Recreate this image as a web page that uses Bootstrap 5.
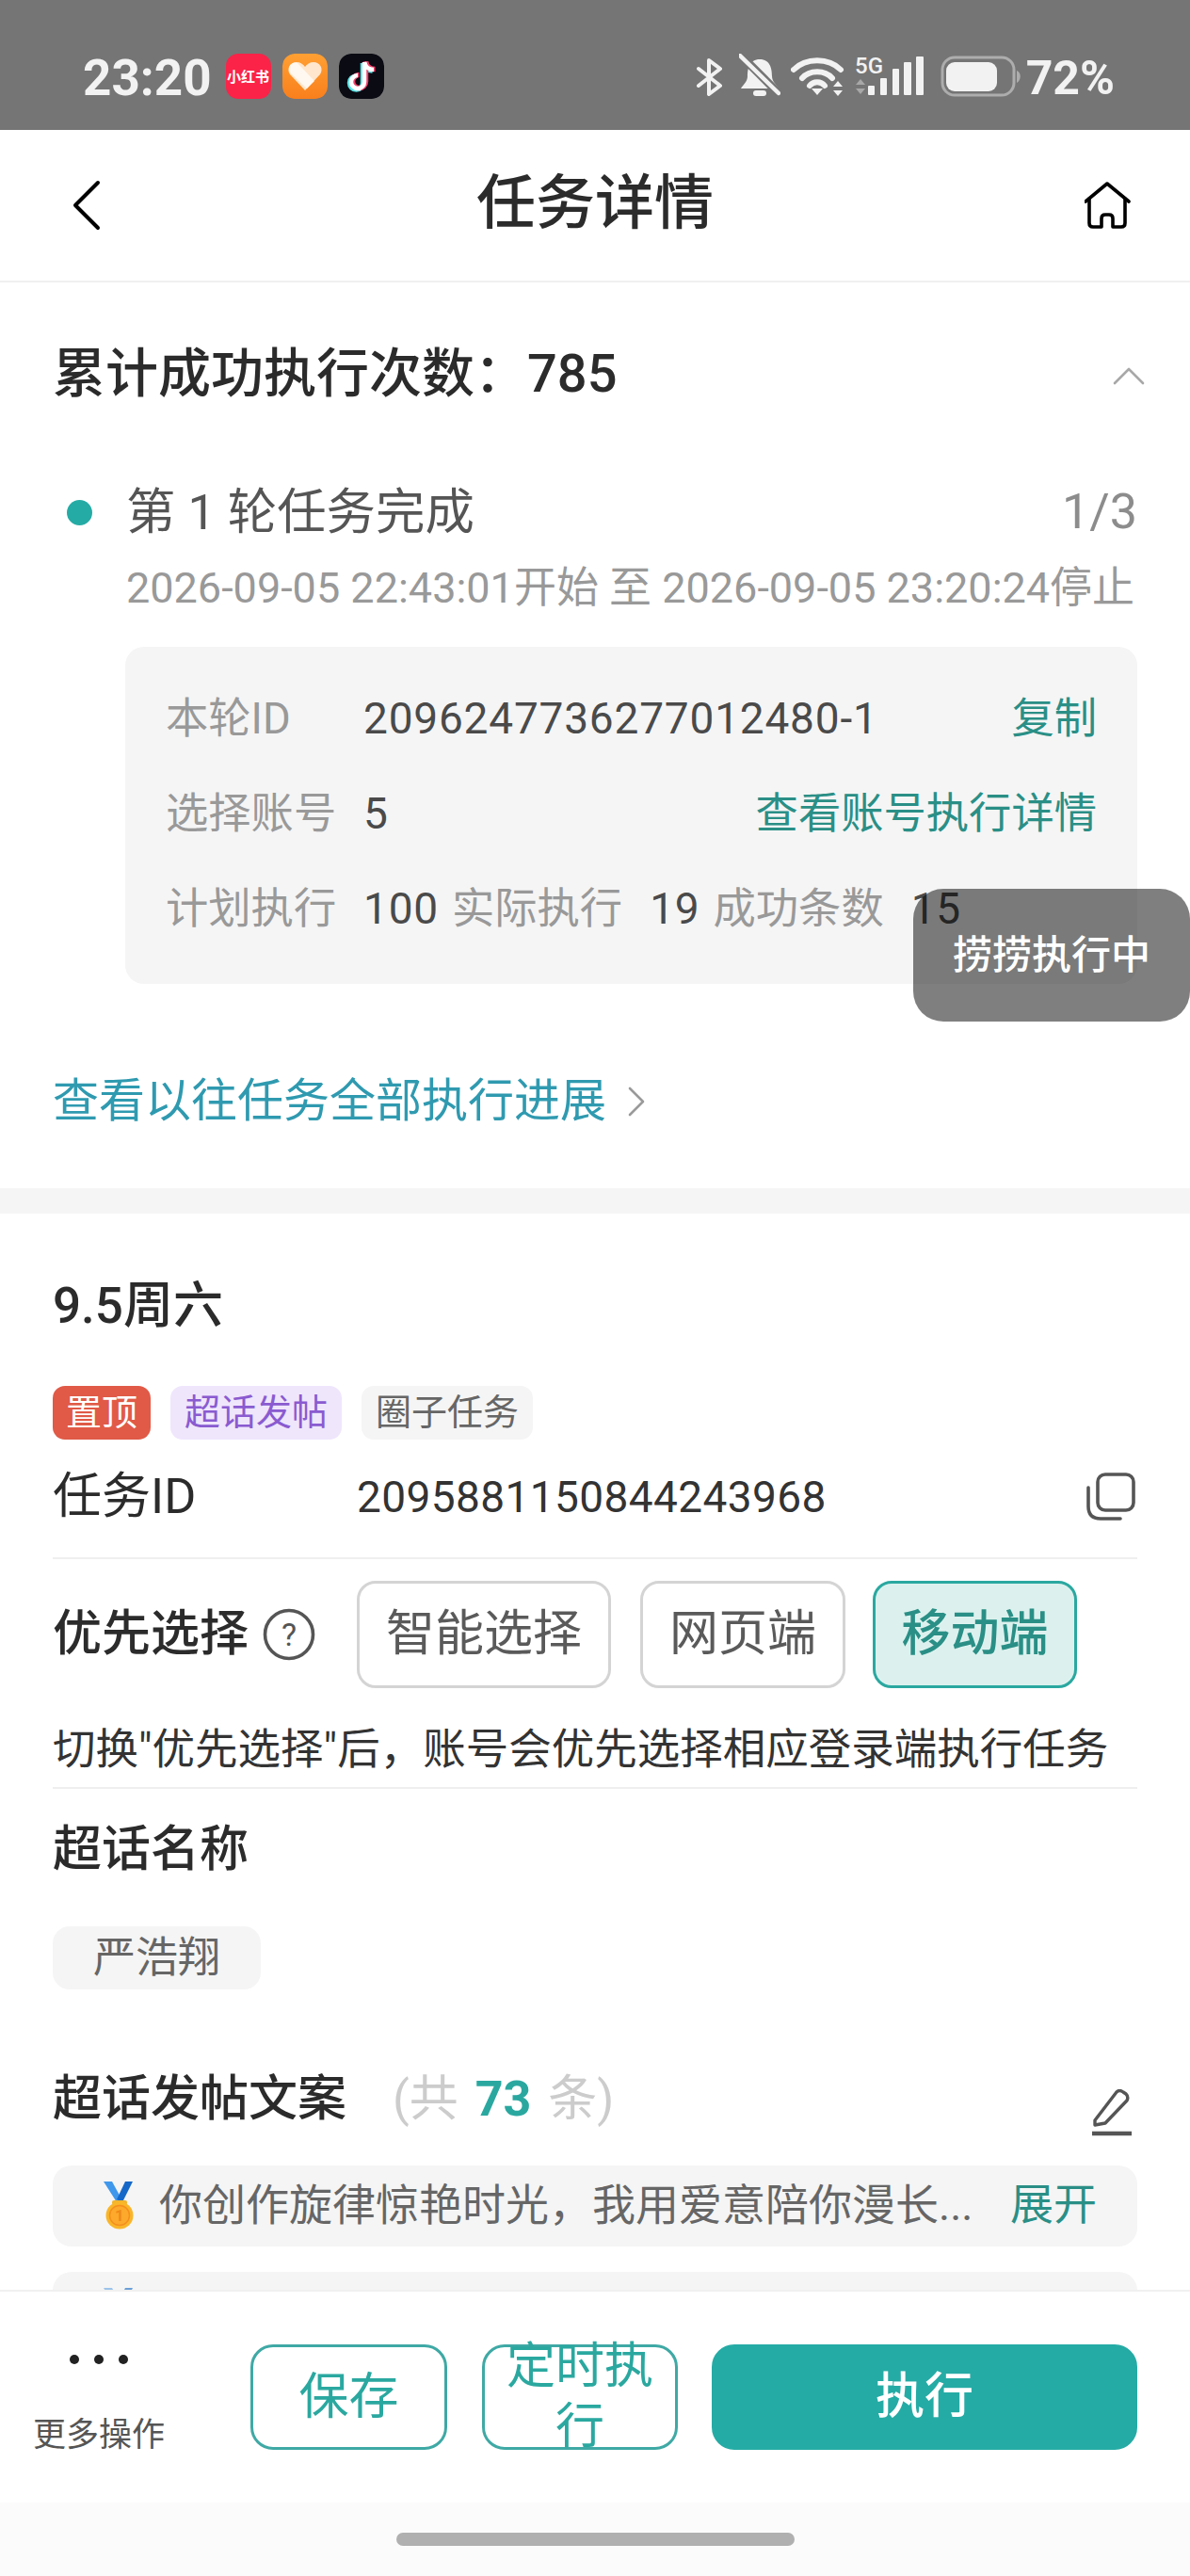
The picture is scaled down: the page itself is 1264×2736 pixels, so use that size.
<!DOCTYPE html>
<html lang="zh-CN">
<head>
    <meta charset="UTF-8">
    <meta name="viewport" content="width=device-width, initial-scale=1">
    <title>任务详情</title>
    <link href="https://cdn.jsdelivr.net/npm/bootstrap@5.3.0/dist/css/bootstrap.min.css" rel="stylesheet">
    <style>
        html, body {
            height: 100%;
        }
        body {
            font-family: Roboto, "Noto Sans CJK SC", sans-serif;
            color: #2b2b2b;
            background: #fff;
            overflow: hidden;
        }
        .app-shell { height: 2736px; }

        /* Status bar */
        .status-strip {
            height: 138px;
            flex: none;
            background: #757575;
            padding: 57px 80px 0 88px;
            color: #f2f2f2;
        }
        .status-time { font-size: 53px; font-weight: 700; line-height: 48px; margin-right: 15px; margin-top: 2px; }
        .app-icon { width: 48px; height: 48px; border-radius: 13px; margin-right: 12px; flex: none; }
        .app-red { background: #fb2348; color: #fff; font-size: 15px; font-weight: 700; line-height: 48px; text-align: center; font-family: "Noto Sans CJK SC", sans-serif; white-space: nowrap; }
        .status-pct { font-size: 50px; font-weight: 700; line-height: 48px; margin-left: 3px; margin-top: 2px; }

        /* Top nav */
        .top-nav { height: 162px; flex: none; border-bottom: 2px solid #f0f0f0; }
        .nav-side { width: 160px; }
        .nav-title { font-size: 63px; font-weight: 500; line-height: 90px; color: #2b2b2b; margin: 0 0 4px; }

        .page-body { min-height: 0; flex: 1 1 0; overflow: hidden; }
        .pane-pad { padding-left: 56px; padding-right: 56px; }

        /* Progress section */
        .total-head { height: 72px; margin-top: 61px; font-size: 56px; font-weight: 500; line-height: 72px; }
        .fold-arrow { margin-right: -8px; margin-top: 4px; }
        .round-head { height: 70px; margin-top: 76px; }
        .round-dot { width: 27px; height: 27px; border-radius: 50%; background: #25aba5; margin-left: 15px; margin-right: 36px; }
        .round-title { font-size: 52.4px; line-height: 70px; color: #555; }
        .round-count { font-size: 52px; line-height: 70px; color: #8c8c8c; }
        .round-time { margin: 18px 0 0 78px; font-size: 45px; line-height: 56px; height: 56px; color: #999; white-space: nowrap; }
        .round-box { margin: 34px 0 0 77px; height: 358px; padding: 26px 43px 0 43px; background: #f5f5f5; border-radius: 20px; }
        .box-line { height: 101px; font-size: 45.3px; white-space: nowrap; }
        .box-label { color: #999; }
        .box-label-fixed { width: 210px; flex: none; }
        .box-val { color: #4a4a4a; font-size: 46px; letter-spacing: .8px; }
        .teal-link { color: #2a8f86; text-decoration: none; }
        .gap-a { margin-right: 14px; }
        .gap-b { margin-right: 29px; }
        .past-link { height: 60px; margin-top: 95px; margin-bottom: 62px; font-size: 49px; line-height: 60px; color: #2f9ab0; text-decoration: none; }
        .past-arrow { margin-left: 21px; }
        .pane-gap { height: 27px; background: #f5f5f5; }

        /* Task section */
        .day-title { height: 64px; margin-top: 66px; font-size: 53px; line-height: 64px; font-weight: 500; }
        .tag-row { margin-top: 53px; gap: 21px; }
        .tag-chip { height: 57px; padding: 0 15px; border-radius: 13px; font-size: 38px; line-height: 57px; }
        .tag-top { background: #e05a47; color: #fff; padding: 0 14px; }
        .tag-purple { background: #efe6fc; color: #8a5bd0; }
        .tag-grey { background: #f5f5f5; color: #666; }
        .id-row { height: 60px; margin-top: 31px; }
        .id-label { width: 323px; font-size: 52px; line-height: 60px; }
        .id-value { font-size: 46px; line-height: 60px; color: #333; letter-spacing: .4px; }
        .thin-rule { height: 2px; background: #efefef; }
        .pick-row { margin-top: 23px; height: 114px; }
        .pick-label { font-size: 52px; line-height: 60px; width: 208px; font-weight: 500; margin-right: 15px; white-space: nowrap; }
        .pick-btn { height: 114px; padding: 0; font-size: 52px; line-height: 1; color: #5a5a5a; background: #fff; border: 3px solid #d4d4d4; border-radius: 20px; }
        .pick-btn.on { color: #2a8f86; background: #dcf1ee; border-color: #2aa8a0; font-weight: 500; }
        .pick-a { width: 270px; margin-left: 44px; margin-right: 31px; }
        .pick-b { width: 218px; margin-right: 29px; }
        .pick-c { width: 217px; }
        .pick-note { height: 60px; margin-top: 36px; margin-bottom: 9px; font-size: 45.5px; line-height: 60px; color: #333; white-space: nowrap; }
        .sub-title { height: 64px; font-size: 52px; line-height: 64px; font-weight: 500; color: #2b2b2b; }
        .topic-chip { width: 221px; height: 67px; margin-top: 49px; background: #f5f5f5; border-radius: 18px; font-size: 45px; line-height: 67px; text-align: center; color: #666; }
        .count-note { margin-left: 49px; color: #ccc; font-weight: 400; word-spacing: 5px; }
        .count-num { color: #2aa8a0; font-weight: 700; }
        .copy-card { height: 86px; background: #f5f5f5; border-radius: 20px; padding: 0 43px 3px 52px; font-size: 46px; color: #666; white-space: nowrap; }
        .copy-text { margin-left: 23px; flex-grow: 1; line-height: 80px; }

        /* Bottom action bar */
        .action-bar { height: 226px; flex: none; border-top: 2px solid #f0f0f0; padding: 56px 56px 0 0; background: #fff; }
        .more-col { width: 210px; flex: none; }
        .more-dots { gap: 16px; padding-top: 11px; height: 74px; }
        .more-dots span { width: 10px; height: 10px; border-radius: 50%; background: #222; }
        .more-text { font-size: 35px; line-height: 46px; color: #555; white-space: nowrap; }
        .act-btn { height: 112px; padding: 0; font-size: 52px; line-height: 64px; border-radius: 24px; border: 3px solid #3fa9a5; color: #2aa8a0; background: #fff; }
        .act-save { width: 209px; margin-left: 56px; font-size: 53px; }
        .act-plan { width: 208px; margin-left: 37px; }
        .act-run { width: 452px; margin-left: 36px; background: #25aba5; border-color: #25aba5; color: #fff; font-weight: 500; }
        .gesture-strip { height: 78px; flex: none; background: #fbfbfb; padding-top: 32px; }
        .gesture-bar { width: 423px; height: 14px; border-radius: 7px; background: #b0b0b0; }

        /* Toast over content */
        .toast-pill { right: 0; top: 944px; width: 294px; height: 141px; border-radius: 32px; background: rgba(0, 0, 0, .5); color: #fff; font-size: 42px; font-weight: 500; z-index: 5; }
    </style>
</head>
<body>

<div class="app-shell d-flex flex-column position-relative">

    <!-- Status bar -->
    <div class="status-strip d-flex align-items-start">
        <div class="status-time">23:20</div>
        <div class="app-icon app-red">小红书</div>
        <svg class="app-icon" viewBox="0 0 48 48">
            <defs>
                <linearGradient id="orangeBg" x1="0" y1="0" x2="0" y2="1"><stop offset="0" stop-color="#ffa033"/><stop offset="1" stop-color="#f97f1c"/></linearGradient>
            </defs>
            <rect width="48" height="48" rx="13" fill="url(#orangeBg)"/>
            <path d="M24 39 L8 22 C4 16 8 9 15 9 C19 9 22 11 24 14 C26 11 29 9 33 9 C40 9 44 16 40 22 Z" fill="#ffe6cc"/>
            <path d="M8 20 C5 14 10 8 16 10 L34 29 L26 37 Z" fill="#fff8f0"/>
        </svg>
        <svg class="app-icon" viewBox="0 0 48 48">
            <rect width="48" height="48" rx="13" fill="#0b0b14"/>
            <path d="M27 9 V30 A7 7 0 1 1 20 23" fill="none" stroke="#5ee4e6" stroke-width="5.5" transform="translate(-1.5 1)"/>
            <path d="M27 9 C28 14 32 17 37 17" fill="none" stroke="#5ee4e6" stroke-width="5.5" transform="translate(-1.5 1)"/>
            <path d="M27 9 V30 A7 7 0 1 1 20 23" fill="none" stroke="#f0416a" stroke-width="5.5" transform="translate(1.5 -.5)"/>
            <path d="M27 9 C28 14 32 17 37 17" fill="none" stroke="#f0416a" stroke-width="5.5" transform="translate(1.5 -.5)"/>
            <path d="M27 9 V30 A7 7 0 1 1 20 23" fill="none" stroke="#fff" stroke-width="4.5"/>
            <path d="M27 9 C28 14 32 17 37 17" fill="none" stroke="#fff" stroke-width="4.5"/>
        </svg>

        <div class="ms-auto d-flex align-items-start">
            <svg width="30" height="42" viewBox="0 0 30 42" class="mt-1" fill="none" stroke="#f2f2f2" stroke-width="4" stroke-linecap="round" stroke-linejoin="round">
                <path d="M3 12 L26 30 L14 39 V3 L26 12 L3 30"/>
            </svg>
            <svg width="44" height="46" viewBox="0 0 44 46" style="margin-left:16px">
                <path d="M22 6 C33 6 35 16 35 24 C35 30 40 33 42 37 H2 C4 33 9 30 9 24 C9 16 11 6 22 6 Z" fill="#f2f2f2"/>
                <rect x="15" y="39" width="14" height="6" rx="3" fill="#f2f2f2"/>
                <path d="M2 2 L42 42" stroke="#757575" stroke-width="9"/>
                <path d="M1 2 L42 42" stroke="#f2f2f2" stroke-width="4.5" stroke-linecap="round"/>
            </svg>
            <svg width="58" height="42" viewBox="0 0 58 42" style="margin-left:11px;margin-top:3px" fill="none" stroke="#f2f2f2" stroke-width="6" stroke-linecap="round">
                <path d="M3 14 C16 1 40 1 53 14"/>
                <path d="M12 23 C20 14 36 14 44 23"/>
                <path d="M20 31 C24 26 32 26 36 31"/>
                <path d="M28 41 L22 34 H34 Z" fill="#f2f2f2" stroke="none"/>
                <path d="M50 26 L45 32 H55 Z M50 42 L45 36 H55 Z" fill="#f2f2f2" stroke="none"/>
            </svg>
            <svg width="74" height="50" viewBox="0 -6 74 50" style="margin-left:10px;margin-top:-5px">
                <text x="0" y="20" font-family="Roboto, sans-serif" font-size="24" font-weight="500" fill="#f2f2f2">5G</text>
                <path d="M6 26 L1 32 H11 Z" fill="#a8a8a8"/>
                <path d="M6 42 L1 36 H11 Z" fill="#a8a8a8"/>
                <g fill="#f2f2f2">
                    <rect x="14" y="33" width="7" height="10" rx="1"/>
                    <rect x="27" y="25" width="7" height="18" rx="1"/>
                    <rect x="40" y="15" width="7" height="28" rx="1"/>
                    <rect x="52" y="8" width="8" height="35" rx="1"/>
                    <rect x="65" y="2" width="8" height="41" rx="1"/>
                </g>
            </svg>
            <svg width="88" height="44" viewBox="0 0 88 44" style="margin-left:17px;margin-top:2px">
                <rect x="2" y="2" width="76" height="40" rx="13" fill="none" stroke="#adadad" stroke-width="3"/>
                <rect x="6" y="7" width="54" height="31" rx="9" fill="#f2f2f2"/>
                <path d="M81 16 C86 18 86 26 81 29 Z" fill="#adadad"/>
            </svg>
            <div class="status-pct">72%</div>
        </div>
    </div>

    <!-- Top nav -->
    <div class="top-nav d-flex align-items-center">
        <div class="nav-side" style="padding-left:77px">
            <svg width="30" height="54" viewBox="0 0 30 54" class="d-block" fill="none" stroke="#000" stroke-width="4" stroke-linecap="round" stroke-linejoin="round">
                <path d="M27 3 L3 27 L27 51"/>
            </svg>
        </div>
        <h1 class="nav-title flex-grow-1 text-center">任务详情</h1>
        <div class="nav-side d-flex justify-content-end" style="padding-right:62px">
            <svg width="50" height="50" viewBox="13 12 50 50" class="d-block" fill="none" stroke="#000" stroke-width="3.6" stroke-linecap="round" stroke-linejoin="round">
                <path d="M14 33 L37 14 L60 33"/>
                <path d="M18 30 V56 Q18 60 22 60 H31 V51 Q31 47 35 47 H39 Q43 47 43 51 V60 H52 Q56 60 56 56 V30"/>
            </svg>
        </div>
    </div>

    <div class="page-body">
        <!-- Progress -->
        <div class="pane-pad">
            <div class="total-head d-flex align-items-center justify-content-between">
                <span>累计成功执行次数：785</span>
                <svg width="34" height="20" viewBox="0 0 34 20" class="fold-arrow" fill="none" stroke="#a8a8a8" stroke-width="2.6" stroke-linecap="round" stroke-linejoin="round">
                    <path d="M2 18 L17 3 L32 18"/>
                </svg>
            </div>
            <div class="round-head d-flex align-items-center">
                <span class="round-dot"></span>
                <span class="round-title">第 1 轮任务完成</span>
                <span class="round-count ms-auto">1/3</span>
            </div>
            <div class="round-time">2026-09-05 22:43:01开始 至 2026-09-05 23:20:24停止</div>
            <div class="round-box">
                <div class="box-line d-flex align-items-center">
                    <span class="box-label box-label-fixed">本轮ID</span>
                    <span class="box-val">2096247736277012480-1</span>
                    <a class="teal-link ms-auto" href="#">复制</a>
                </div>
                <div class="box-line d-flex align-items-center">
                    <span class="box-label box-label-fixed">选择账号</span>
                    <span class="box-val">5</span>
                    <a class="teal-link ms-auto" href="#">查看账号执行详情</a>
                </div>
                <div class="box-line d-flex align-items-center">
                    <span class="box-label box-label-fixed">计划执行</span>
                    <span class="box-val gap-a">100</span>
                    <span class="box-label gap-b">实际执行</span>
                    <span class="box-val gap-a">19</span>
                    <span class="box-label gap-b">成功条数</span>
                    <span class="box-val">15</span>
                </div>
            </div>
            <a class="past-link d-flex align-items-center" href="#">
                <span>查看以往任务全部执行进展</span>
                <svg width="22" height="34" viewBox="0 0 22 34" class="past-arrow" fill="none" stroke="#9a9a9a" stroke-width="2.6" stroke-linecap="round" stroke-linejoin="round">
                    <path d="M4 3 L18 17 L4 31"/>
                </svg>
            </a>
        </div>
        <div class="pane-gap"></div>

        <!-- Task info -->
        <div class="pane-pad">
            <div class="day-title">9.5周六</div>
            <div class="tag-row d-flex">
                <span class="tag-chip tag-top">置顶</span>
                <span class="tag-chip tag-purple">超话发帖</span>
                <span class="tag-chip tag-grey">圈子任务</span>
            </div>
            <div class="id-row d-flex align-items-center">
                <span class="id-label">任务ID</span>
                <span class="id-value">2095881150844243968</span>
                <svg width="54" height="54" viewBox="15 10 54 54" class="ms-auto" fill="none" stroke="#555" stroke-width="3.6" stroke-linecap="round" stroke-linejoin="round">
                    <rect x="27" y="13" width="38" height="38" rx="8"/>
                    <path d="M17 27 V47 Q17 60 30 60 H51"/>
                </svg>
            </div>
            <div class="thin-rule" style="margin-top:34px"></div>
            <div class="pick-row d-flex align-items-center">
                <span class="pick-label">优先选择</span>
                <svg width="56" height="56" viewBox="0 0 56 56" class="flex-none">
                    <circle cx="28" cy="28" r="25.5" fill="none" stroke="#555" stroke-width="3.6"/>
                    <text x="28" y="40" text-anchor="middle" font-family="Roboto, sans-serif" font-size="34" fill="#555">?</text>
                </svg>
                <button class="btn pick-btn pick-a">智能选择</button>
                <button class="btn pick-btn pick-b">网页端</button>
                <button class="btn pick-btn pick-c on">移动端</button>
            </div>
            <div class="pick-note">切换"优先选择"后，账号会优先选择相应登录端执行任务</div>
            <div class="thin-rule"></div>
            <div class="sub-title" style="margin-top:33px">超话名称</div>
            <div class="topic-chip">严浩翔</div>
            <div class="sub-title d-flex align-items-start" style="margin-top:85px">
                <span>超话发帖文案</span>
                <span class="count-note">(共 <span class="count-num">73</span> 条)</span>
                <svg width="46" height="50" viewBox="0 0 46 50" class="ms-auto" style="margin-top:21px;margin-right:4px" fill="none" stroke="#555" stroke-width="3.4" stroke-linejoin="round">
                    <path d="M5 33 L28 3 Q31 0 35 3 L38 5 Q41 8 39 12 L16 36 L5 38 Z"/>
                    <path d="M2 47 H44" stroke-width="4.5"/>
                </svg>
            </div>
            <div class="copy-card d-flex align-items-center" style="margin-top:38px">
                <svg width="38" height="54" viewBox="8 9 38 54" class="flex-none">
                    <path d="M10 11 H19 L31 33 H24 Z" fill="#3f98ec"/>
                    <path d="M41 11 H33 L24 30 L30 33 Z" fill="#1668c8"/>
                    <rect x="19" y="31" width="16" height="5" rx="2" fill="#f2b52e"/>
                    <circle cx="27" cy="47" r="14.5" fill="#f9b62a"/>
                    <circle cx="27" cy="47" r="10.5" fill="#fca92c" stroke="#f58f1e" stroke-width="1.5"/>
                    <text x="27" y="53" text-anchor="middle" font-family="Roboto, sans-serif" font-size="17" font-weight="700" fill="#ef8a17">1</text>
                </svg>
                <span class="copy-text">你创作旋律惊艳时光，我用爱意陪你漫长...</span>
                <a class="teal-link" href="#">展开</a>
            </div>
            <div class="copy-card d-flex align-items-center" style="margin-top:27px">
                <svg width="38" height="54" viewBox="8 9 38 54" class="flex-none">
                    <path d="M10 11 H19 L31 33 H24 Z" fill="#9cc3ea"/>
                    <path d="M41 11 H33 L24 30 L30 33 Z" fill="#6b9fd8"/>
                </svg>
            </div>
        </div>
    </div>

    <!-- Bottom actions -->
    <div class="action-bar d-flex align-items-start">
        <div class="more-col d-flex flex-column align-items-center">
            <div class="more-dots d-flex"><span></span><span></span><span></span></div>
            <div class="more-text">更多操作</div>
        </div>
        <button class="btn act-btn act-save d-flex align-items-center justify-content-center">保存</button>
        <button class="btn act-btn act-plan d-flex align-items-center justify-content-center">定时执行</button>
        <button class="btn act-btn act-run d-flex align-items-center justify-content-center">执行</button>
    </div>
    <div class="gesture-strip d-flex justify-content-center">
        <div class="gesture-bar"></div>
    </div>

    <div class="toast-pill position-absolute d-flex align-items-center justify-content-center">捞捞执行中</div>
</div>

<script src="https://cdn.jsdelivr.net/npm/bootstrap@5.3.0/dist/js/bootstrap.bundle.min.js"></script>
</body>
</html>
